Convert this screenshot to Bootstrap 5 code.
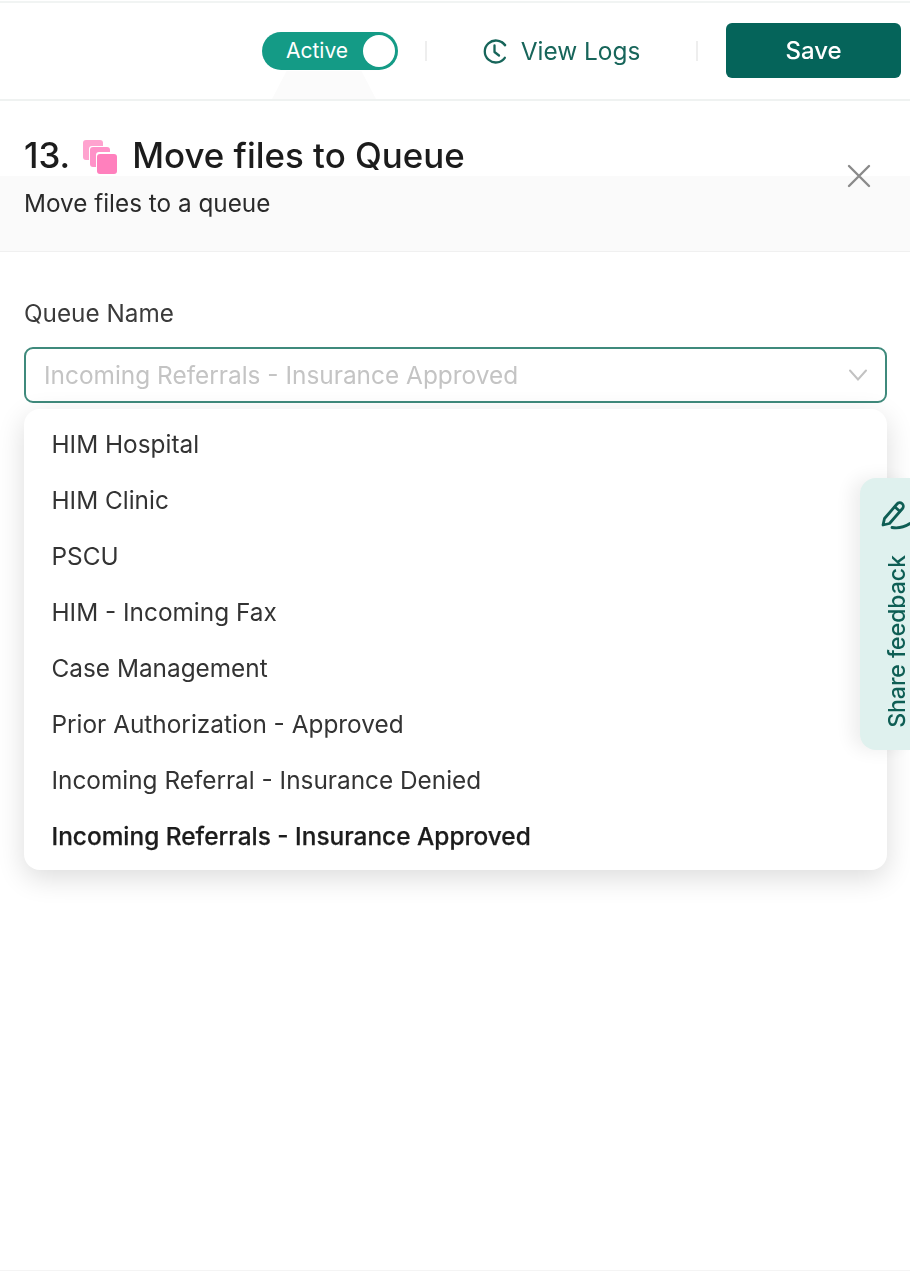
<!DOCTYPE html>
<html lang="en">
<head>
<meta charset="utf-8">
<title>Move files to Queue</title>
<link href="https://cdn.jsdelivr.net/npm/bootstrap@5.3.0/dist/css/bootstrap.min.css" rel="stylesheet">
<style>
html,body{height:100%}
body{font-family:Inter,"Liberation Sans",sans-serif;color:#1f1f1f;background:#fff;overflow:hidden;width:910px;height:1272px;position:relative;filter:blur(.45px)}
.top-bar{height:100px;margin-top:1px;border-top:2px solid #f1f4f3;border-bottom:2px solid #eff2f1;padding:20px 9px 0 0;position:relative}
.switch-pill{width:136px;height:38px;margin-top:9px;margin-right:27px;border-radius:19px;background:#149b86;color:#fff;font-size:21px;padding:0 3px 0 24px}
.switch-knob{width:32px;height:32px;border-radius:50%;background:#fff}
.v-rule{width:2px;height:20px;background:#eeeeee;margin-top:18px}
.logs-link{width:269px;margin-top:7px;height:42px;color:#17655a;font-size:24.4px;gap:13px}
.save-btn.btn{width:175px;height:55px;background:#05645a;border:0;border-radius:6px;color:#fff;font-size:24px;font-weight:500;margin-left:28px}
.trap{position:absolute;left:272px;top:68px;width:104px;height:28px;background:#fbfbfb;clip-path:polygon(14% 0,86% 0,100% 100%,0 100%)}
.title-row{padding:33px 24px 0;height:75px;font-size:34.9px;font-weight:500;line-height:44px;color:#1c1c1c}
.stack-ico{width:35px;height:35px;margin:4px 14px 0 13px;flex:none}
.sub-band{background:#fafafa;height:76px;border-bottom:1px solid #f0f0f0;padding:10px 24px 0;font-size:24.3px;line-height:34px;color:#2a2a2a}
.close-x{position:absolute;left:846px;top:163px;width:26px;height:26px}
.field-wrap{padding:44px 23px 0 24px}
.field-label{font-size:24.3px;line-height:34px;color:#3b3b3b;margin-bottom:17px}
.select-box{height:56px;border:2px solid #3f8a7c;border-radius:9px;padding:0 18px;font-size:24.42px;color:#c4c4c4;background:#fff}
.menu-panel{margin-top:6px;height:461px;border-radius:16px;background:#fff;box-shadow:0 8px 28px rgba(0,0,0,.14);padding:7px 0 6px;border:0}
.menu-panel .list-group-item{border:0;background:transparent;height:56px;padding:0 27.5px;font-size:24.36px;line-height:56px;color:#333}
.menu-panel .list-group-item.picked{font-weight:500;font-size:24.42px;color:#1c1c1c;-webkit-text-stroke:.25px #1c1c1c}
.fb-tab{position:absolute;left:860px;top:478px;width:50px;height:272px;background:#dff1ee;border-radius:16px 0 0 16px;box-shadow:-8px 0 18px rgba(0,0,0,.07);color:#0e5e54}
.fb-text{position:absolute;left:26px;bottom:22px;writing-mode:vertical-rl;transform:rotate(180deg);font-size:23px;line-height:22px;font-weight:500;white-space:nowrap}
.fb-ico{position:absolute;left:20px;top:20px;width:30px;height:36px}
.bottom-line{position:absolute;left:0;right:0;top:1270px;height:1px;background:#f4f4f4}
</style>
</head>
<body>
<header class="top-bar d-flex justify-content-end align-items-start">
  <div class="trap"></div>
  <div class="switch-pill d-flex align-items-center justify-content-between">
    <span>Active</span><span class="switch-knob"></span>
  </div>
  <div class="v-rule"></div>
  <a class="logs-link d-flex align-items-center justify-content-center text-decoration-none" href="#">
    <svg width="25" height="25" viewBox="0 0 25 25" fill="none" stroke="#17655a" stroke-width="2.3" stroke-linecap="round" stroke-linejoin="round"><path d="M21.8 6.2A11 11 0 1 0 21.8 18.8"/><path d="M11.5 6.5v6.5l4.5 3.5"/><path d="M19.5 3.5l2.7 2.5"/></svg>
    <span>View Logs</span>
  </a>
  <div class="v-rule"></div>
  <button class="btn save-btn" type="button">Save</button>
</header>
<section class="title-row d-flex align-items-center">
  <span>13.</span>
  <svg class="stack-ico" viewBox="0 0 35 35"><rect x="0" y="0" width="20" height="20" rx="3" fill="#ffa3cf"/><rect x="6" y="6" width="22" height="22" rx="3" fill="#fff"/><rect x="7" y="7" width="20" height="20" rx="3" fill="#ff92c8"/><rect x="13" y="12" width="22" height="23" rx="3" fill="#fff"/><rect x="14" y="14" width="20" height="20" rx="3" fill="#ff80bd"/></svg>
  <span>Move files to Queue</span>
</section>
<section class="sub-band">Move files to a queue</section>
<svg class="close-x" viewBox="0 0 26 26" stroke="#8a8a8a" stroke-width="2.4" stroke-linecap="round"><path d="M3 3l20 20M23 3L3 23"/></svg>
<main class="field-wrap">
  <div class="field-label">Queue Name</div>
  <div class="select-box d-flex align-items-center justify-content-between">
    <span>Incoming Referrals - Insurance Approved</span>
    <svg width="18" height="12" viewBox="0 0 18 12" fill="none" stroke="#c2c2c2" stroke-width="2" stroke-linecap="round"><path d="M1 1.5l8 9 8-9"/></svg>
  </div>
  <ul class="list-group menu-panel">
    <li class="list-group-item">HIM Hospital</li>
    <li class="list-group-item">HIM Clinic</li>
    <li class="list-group-item">PSCU</li>
    <li class="list-group-item">HIM - Incoming Fax</li>
    <li class="list-group-item">Case Management</li>
    <li class="list-group-item">Prior Authorization - Approved</li>
    <li class="list-group-item">Incoming Referral - Insurance Denied</li>
    <li class="list-group-item picked">Incoming Referrals - Insurance Approved</li>
  </ul>
</main>
<aside class="fb-tab">
  <svg class="fb-ico" viewBox="0 0 30 36" fill="none" stroke="#0e5e54" stroke-width="2.8" stroke-linecap="round" stroke-linejoin="round"><path d="M3 27l1.500-6.500L17 6a3.500 3.500 0 0 1 5.500 4.500L9.500 25.500z"/><path d="M15 9l4.500 4"/><path d="M12 29.500c6 1 12 0 18-4"/></svg>
  <span class="fb-text">Share feedback</span>
</aside>
<div class="bottom-line"></div>
<script src="https://cdn.jsdelivr.net/npm/bootstrap@5.3.0/dist/js/bootstrap.bundle.min.js"></script>
</body>
</html>
